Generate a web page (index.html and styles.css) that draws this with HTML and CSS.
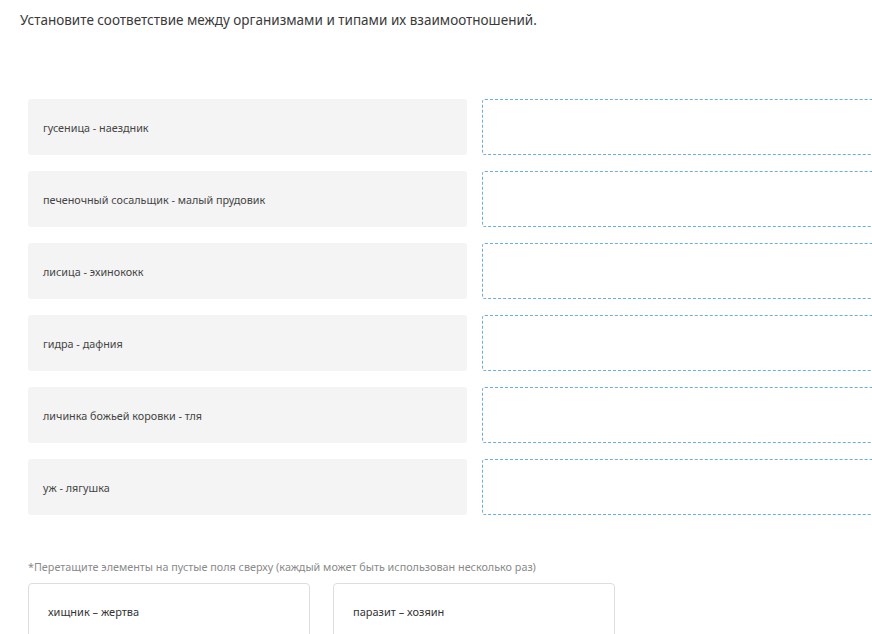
FILE: index.html
```html
<!DOCTYPE html>
<html lang="ru">
<head>
    <meta charset="UTF-8">
    <meta name="viewport" content="width=device-width, initial-scale=1.0">
    <title>Соответствие</title>
    <link rel="stylesheet" href="styles.css">
</head>
<body>
    <div class="task">
        <p class="question">Установите соответствие между организмами и типами их взаимоотношений.</p>

        <div class="pairs">
            <div class="pair">
                <div class="term">гусеница - наездник</div>
                <div class="slot"></div>
            </div>
            <div class="pair">
                <div class="term">печеночный сосальщик - малый прудовик</div>
                <div class="slot"></div>
            </div>
            <div class="pair">
                <div class="term">лисица - эхинококк</div>
                <div class="slot"></div>
            </div>
            <div class="pair">
                <div class="term">гидра - дафния</div>
                <div class="slot"></div>
            </div>
            <div class="pair">
                <div class="term">личинка божьей коровки - тля</div>
                <div class="slot"></div>
            </div>
            <div class="pair">
                <div class="term">уж - лягушка</div>
                <div class="slot"></div>
            </div>
        </div>

        <p class="hint">*Перетащите элементы на пустые поля сверху (каждый может быть использован несколько раз)</p>

        <div class="options">
            <div class="option">хищник – жертва</div>
            <div class="option">паразит – хозяин</div>
        </div>
    </div>
</body>
</html>
```

FILE: styles.css
```css
body {
    margin: 0;
    background-color: #fff;
    font-family: "Noto Sans", "Open Sans", sans-serif;
    color: #333;
    overflow: hidden;
}

.task {
    padding: 10px 0 0 20px;
}

.question {
    margin: 0;
    font-size: 13.5px;
    line-height: 20px;
    color: #3a3a3a;
}

.pairs {
    display: flex;
    flex-direction: column;
    gap: 16px;
    margin: 69px 0 0 8px;
}

.pair {
    display: flex;
    gap: 15px;
}

.term {
    flex: 0 0 439px;
    height: 56px;
    box-sizing: border-box;
    padding: 0 15px;
    display: flex;
    align-items: center;
    background-color: #f4f4f4;
    border-radius: 3px;
    font-size: 10.8px;
    color: #444;
}

.slot {
    flex: 0 0 439px;
    height: 56px;
    box-sizing: border-box;
    border: 1px dashed #6aaedb;
    border-radius: 3px;
}

.hint {
    margin: 44px 0 0 8px;
    font-size: 10.8px;
    line-height: 16px;
    color: #8a8a8a;
}

.options {
    display: flex;
    gap: 23px;
    margin: 8px 0 0 8px;
}

.option {
    width: 282px;
    height: 56px;
    box-sizing: border-box;
    padding: 0 19px;
    display: flex;
    align-items: center;
    border: 1px solid #ddd;
    border-radius: 4px;
    font-size: 11px;
    color: #333;
}
```
